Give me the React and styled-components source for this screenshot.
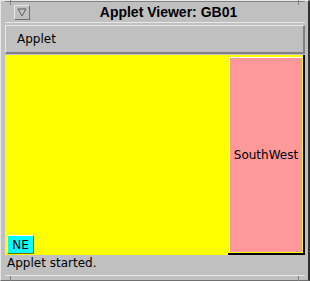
import React from "react";
import styled, { createGlobalStyle } from "styled-components";

const Global = createGlobalStyle`
  html, body { margin: 0; padding: 0; background: #c0c0c0; }
  #root { width: 310px; height: 281px; }
`;

const Frame = styled.div`
  position: relative;
  box-sizing: border-box;
  width: 310px;
  height: 281px;
  background: #c0c0c0;
  border-top: 1px solid #e8e8e8;
  border-left: 1px solid #e8e8e8;
  border-right: 2px solid #303030;
  border-bottom: 1px solid #707070;
  display: flex;
  flex-direction: column;
  padding: 0 3px 4px 4px;
  font-family: "DejaVu Sans", "Liberation Sans", sans-serif;
`;

const Corner = styled.div`
  position: absolute;
  width: 9px;
  height: 5px;
  ${(p) => (p.$top ? "top: -1px;" : "bottom: -1px;")}
  ${(p) => (p.$left ? "left: 9px;" : "right: 9px;")}
  ${(p) => (p.$left ? "border-left: 1px solid #808080;" : "border-right: 1px solid #808080;")}
  background: transparent;
`;

const TitleBar = styled.div`
  position: relative;
  height: 22px;
  border-top: 1px solid #808080;
  border-bottom: 1px solid #e8e8e8;
  display: flex;
  align-items: center;
  justify-content: center;
  box-sizing: border-box;
  padding-left: 27px;
`;

const MenuButton = styled.div`
  position: absolute;
  left: 9px;
  top: 3px;
  width: 16px;
  height: 15px;
  box-sizing: border-box;
  border-top: 1px solid #e8e8e8;
  border-left: 1px solid #e8e8e8;
  border-right: 1px solid #707070;
  border-bottom: 1px solid #707070;
  display: flex;
  align-items: center;
  justify-content: center;
`;

const Title = styled.div`
  font-family: "Liberation Sans", Arial, sans-serif;
  font-weight: bold;
  font-size: 14px;
  color: #000;
`;

const AppletBar = styled.div`
  margin-top: 2px;
  height: 29px;
  box-sizing: border-box;
  border-top: 1px solid #e8e8e8;
  border-left: 1px solid #e8e8e8;
  border-right: 2px solid #808080;
  border-bottom: 2px solid #808080;
  display: flex;
  align-items: center;
  padding-left: 11px;
  font-size: 12px;
  color: #000;
`;

const Content = styled.div`
  margin-top: 1px;
  height: 200px;
  display: flex;
  background: #ffff00;
`;

const YellowArea = styled.div`
  flex: 1;
  display: flex;
  align-items: flex-end;
  padding: 0 0 1px 2px;
`;

const Label = styled.div`
  box-sizing: border-box;
  width: 27px;
  height: 19px;
  background: ${(p) => p.$bg};
  border-top: 1px solid #ffffff;
  border-left: 1px solid #ffffff;
  border-right: 1px solid #707000;
  border-bottom: 1px solid #707000;
  display: flex;
  align-items: center;
  justify-content: center;
  font-size: 12px;
  color: #000;
`;

const SWCell = styled.div`
  width: 77px;
  box-sizing: border-box;
  border-right: 2px solid #000;
  border-bottom: 2px solid #000;
  padding: 2px 1px 1px 1px;
  display: flex;
`;

const Pink = styled.div`
  flex: 1;
  box-sizing: border-box;
  background: #ff9999;
  border-top: 1px solid #ffffff;
  border-left: 1px solid #ffffff;
  display: flex;
  align-items: center;
  justify-content: center;
  font-size: 12px;
  color: #000;
`;

const Status = styled.div`
  flex: 1;
  display: flex;
  align-items: center;
  padding-left: 2px;
  padding-bottom: 4px;
  font-size: 12px;
  color: #000;
  border-bottom: 1px solid #e8e8e8;
`;

export default function App() {
  return (
    <>
      <Global />
      <Frame>
        <Corner $top $left />
        <Corner $top />
        <Corner $left />
        <Corner />
        <TitleBar>
          <MenuButton>
            <svg width="10" height="9" viewBox="0 0 10 9">
              <polyline points="1,1 9,1 5,8 1,1" fill="none" stroke="#606060" strokeWidth="1" />
            </svg>
          </MenuButton>
          <Title>Applet Viewer: GB01</Title>
        </TitleBar>
        <AppletBar>Applet</AppletBar>
        <Content>
          <YellowArea>
            <Label $bg="#00ffff">NE</Label>
          </YellowArea>
          <SWCell>
            <Pink>SouthWest</Pink>
          </SWCell>
        </Content>
        <Status>Applet started.</Status>
      </Frame>
    </>
  );
}
